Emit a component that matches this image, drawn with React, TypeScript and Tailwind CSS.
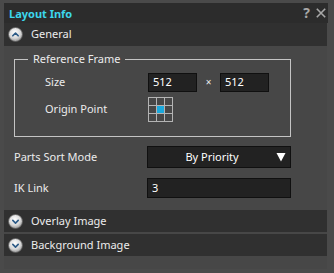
import React from "react";

const font = { fontFamily: '"Noto Sans", "Open Sans", sans-serif' };

function Circle({ up }: { up?: boolean }) {
  const id = up ? "gu" : "gd";
  return (
    <svg width="15" height="15" viewBox="0 0 15 15" className="shrink-0">
      <defs>
        <radialGradient id={id} cx="45%" cy="35%" r="70%">
          <stop offset="0%" stopColor="#ffffff" />
          <stop offset="60%" stopColor="#d6d6d6" />
          <stop offset="100%" stopColor="#8a8a8a" />
        </radialGradient>
      </defs>
      <circle cx="7.5" cy="7.5" r="7" fill={`url(#${id})`} stroke="#5a5a5a" strokeWidth="0.8" />
      {up ? (
        <path d="M4.8 8.8 L7.5 6.1 L10.2 8.8" fill="none" stroke="#2c5a86" strokeWidth="1.6" strokeLinecap="round" strokeLinejoin="round" />
      ) : (
        <path d="M4.8 6.4 L7.5 9.1 L10.2 6.4" fill="none" stroke="#2c5a86" strokeWidth="1.6" strokeLinecap="round" strokeLinejoin="round" />
      )}
    </svg>
  );
}

function SectionHeader({ label, up, h }: { label: string; up?: boolean; h?: string }) {
  return (
    <div className={`flex items-center gap-[8px] bg-[#303030] pl-[4px] text-[11px] text-[#ececec] ${h ?? "h-[22px]"}`}>
      <Circle up={up} />
      <span>{label}</span>
    </div>
  );
}

export default function App() {
  return (
    <div className="h-[273px] w-[334px] overflow-hidden bg-[#4a4a4a] pl-[4px] pr-[6px] pt-[3px]" style={font}>
      {/* Title bar */}
      <div className="flex h-[20px] items-center justify-between bg-[#2c2c2c] pl-[5px] pr-[2px]">
        <span className="text-[11px] font-bold leading-none text-[#3cd6ec]">Layout Info</span>
        <div className="flex items-center gap-[6px] text-[#a8a8a8]">
          <span className="text-[14px] font-bold leading-none">?</span>
          <svg width="10" height="10" viewBox="0 0 10 10">
            <path d="M0.8 0.8 L9.2 9.2 M9.2 0.8 L0.8 9.2" stroke="#a8a8a8" strokeWidth="1.6" />
          </svg>
        </div>
      </div>

      <div className="mr-[1px] flex flex-col">
        <SectionHeader label="General" up h="h-[23px]" />

        <div className="bg-[#474747] pl-[10px] pr-[36px] pt-[5px] pb-[12px] text-[11px] text-[#ececec]">
          <fieldset className="border border-[#c4c4c4] pb-[14px]">
            <legend className="ml-[13px] px-[5px] leading-[16px]">Reference Frame</legend>
            <div className="mt-[6px] flex items-center">
              <span className="w-[133px] pl-[30px]">Size</span>
              <div className="flex h-[19px] w-[49px] items-center border border-[#101010] bg-[#222222] pl-[4px] text-white">512</div>
              <span className="w-[23px] text-center text-[10px]">×</span>
              <div className="flex h-[19px] w-[49px] items-center border border-[#101010] bg-[#222222] pl-[4px] text-white">512</div>
            </div>
            <div className="mt-[5px] flex items-center">
              <span className="w-[133px] pl-[30px]">Origin Point</span>
              <div className="grid h-[25px] w-[25px] grid-cols-3 grid-rows-3 gap-[1px] bg-[#b4b4b4] p-[1px]">
                <div className="bg-[#474747]" />
                <div className="bg-[#474747]" />
                <div className="bg-[#474747]" />
                <div className="bg-[#474747]" />
                <div className="bg-[#1aa8dc]" />
                <div className="bg-[#474747]" />
                <div className="bg-[#474747]" />
                <div className="bg-[#474747]" />
                <div className="bg-[#474747]" />
              </div>
            </div>
          </fieldset>

          <div className="mt-[9px] flex items-center">
            <span className="w-[134px]">Parts Sort Mode</span>
            <div className="flex h-[22px] w-[145px] items-center border border-[#101010] bg-[#222222] text-white">
              <span className="flex-1 text-center">By Priority</span>
              <svg width="10" height="10" viewBox="0 0 10 10" className="mr-[4px]">
                <path d="M0.5 1 L9.5 1 L5 9.5 Z" fill="#ffffff" />
              </svg>
            </div>
          </div>

          <div className="mt-[10px] flex items-center">
            <span className="w-[134px]">IK Link</span>
            <div className="flex h-[20px] w-[145px] items-center border border-[#101010] bg-[#222222] pl-[4px] text-white">3</div>
          </div>
        </div>

        <SectionHeader label="Overlay Image" />
        <div className="h-[2px] bg-[#474747]" />
        <SectionHeader label="Background Image" />
        <div className="h-[13px] bg-[#474747]" />
      </div>
    </div>
  );
}
